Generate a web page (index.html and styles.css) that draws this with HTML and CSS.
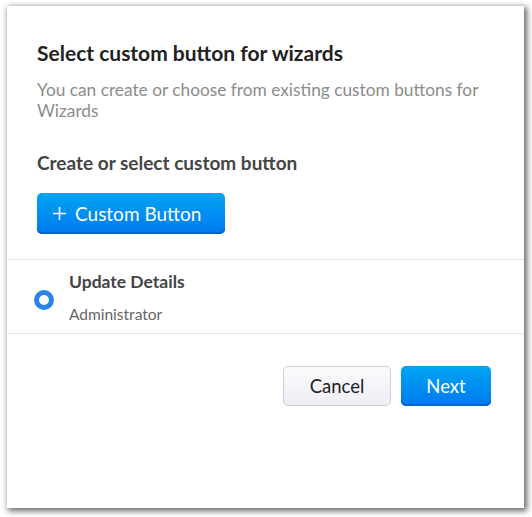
FILE: index.html
```html
<!DOCTYPE html>
<html>
<head>
<meta charset="utf-8">
<link rel="stylesheet" href="styles.css">
</head>
<body>
<div class="dialog">
  <div class="header">
    <h1 class="title">Select custom button for wizards</h1>
    <p class="subtitle">You can create or choose from existing custom buttons for Wizards</p>
  </div>
  <div class="section">
    <h2 class="section-title">Create or select custom button</h2>
    <button class="btn btn-primary btn-add"><svg class="plus" width="13" height="13" viewBox="0 0 13 13"><path d="M6.5 0V13M0 6.5H13" stroke="#fff" stroke-width="1.6" fill="none"/></svg>Custom Button</button>
  </div>
  <div class="list">
    <div class="item">
      <span class="radio"></span>
      <div class="item-text">
        <div class="item-name">Update Details</div>
        <div class="item-meta">Administrator</div>
      </div>
    </div>
  </div>
  <div class="footer">
    <button class="btn btn-secondary">Cancel</button>
    <button class="btn btn-primary btn-next">Next</button>
  </div>
</div>
</body>
</html>
```

FILE: styles.css
```css
html, body {
  margin: 0;
  padding: 0;
  background: #ffffff;
}
body {
  font-family: Lato, "Open Sans", sans-serif;
  padding: 6px 0 9px 7px;
}
.dialog {
  width: 517px;
  height: 502px;
  background: #fff;
  box-shadow: 2px 2px 6px 1px rgba(0,0,0,0.6);
  display: flex;
  flex-direction: column;
}
.header {
  padding: 35px 30px 0 30px;
}
.title {
  margin: 0;
  font-size: 21px;
  line-height: 24px;
  font-weight: 700;
  color: #222;
}
.subtitle {
  margin: 14px 0 0 0;
  font-size: 17.3px;
  line-height: 21px;
  font-weight: 400;
  color: #8c8c8c;
}
.section {
  padding: 30px 30px 25px 30px;
}
.section-title {
  margin: 0;
  font-size: 19px;
  line-height: 24px;
  font-weight: 700;
  color: #444;
}
.btn {
  font-family: Lato, "Open Sans", sans-serif;
  font-size: 18.5px;
  border-radius: 5px;
  cursor: pointer;
  box-sizing: border-box;
}
.btn-primary {
  color: #fff;
  border: none;
  background: linear-gradient(#00a6f2, #0078f0);
  box-shadow: inset 0 -2px 0 #0062cc;
}
.btn-add {
  margin-top: 18px;
  width: 188px;
  height: 41px;
  padding: 0 0 0 16px;
  font-size: 19px;
  text-align: left;
  display: flex;
  align-items: center;
}
.plus {
  margin-right: 9px;
  flex: none;
}
.list {
  border-top: 1px solid #e3e3e3;
  border-bottom: 1px solid #e3e3e3;
  margin-left: 1px;
}
.item {
  display: flex;
  align-items: center;
  padding: 10px 0 9px 26px;
}
.radio {
  width: 10px;
  height: 10px;
  border-radius: 50%;
  border: 5px solid #2a83e8;
  background: #fff;
  flex: none;
  margin-top: 6px;
}
.item-text {
  margin-left: 15px;
}
.item-name {
  font-size: 17.5px;
  font-weight: 700;
  line-height: 24px;
  color: #444;
}
.item-meta {
  margin-top: 10px;
  font-size: 15.5px;
  line-height: 20px;
  color: #666;
}
.footer {
  display: flex;
  justify-content: flex-end;
  gap: 10px;
  padding: 32px 33px 0 0;
}
.btn-secondary {
  width: 108px;
  height: 40px;
  color: #222;
  background: linear-gradient(#fbfbfd, #eceef4);
  border: 1px solid #ccd0dc;
}
.btn-next {
  width: 90px;
  height: 40px;
}
```
